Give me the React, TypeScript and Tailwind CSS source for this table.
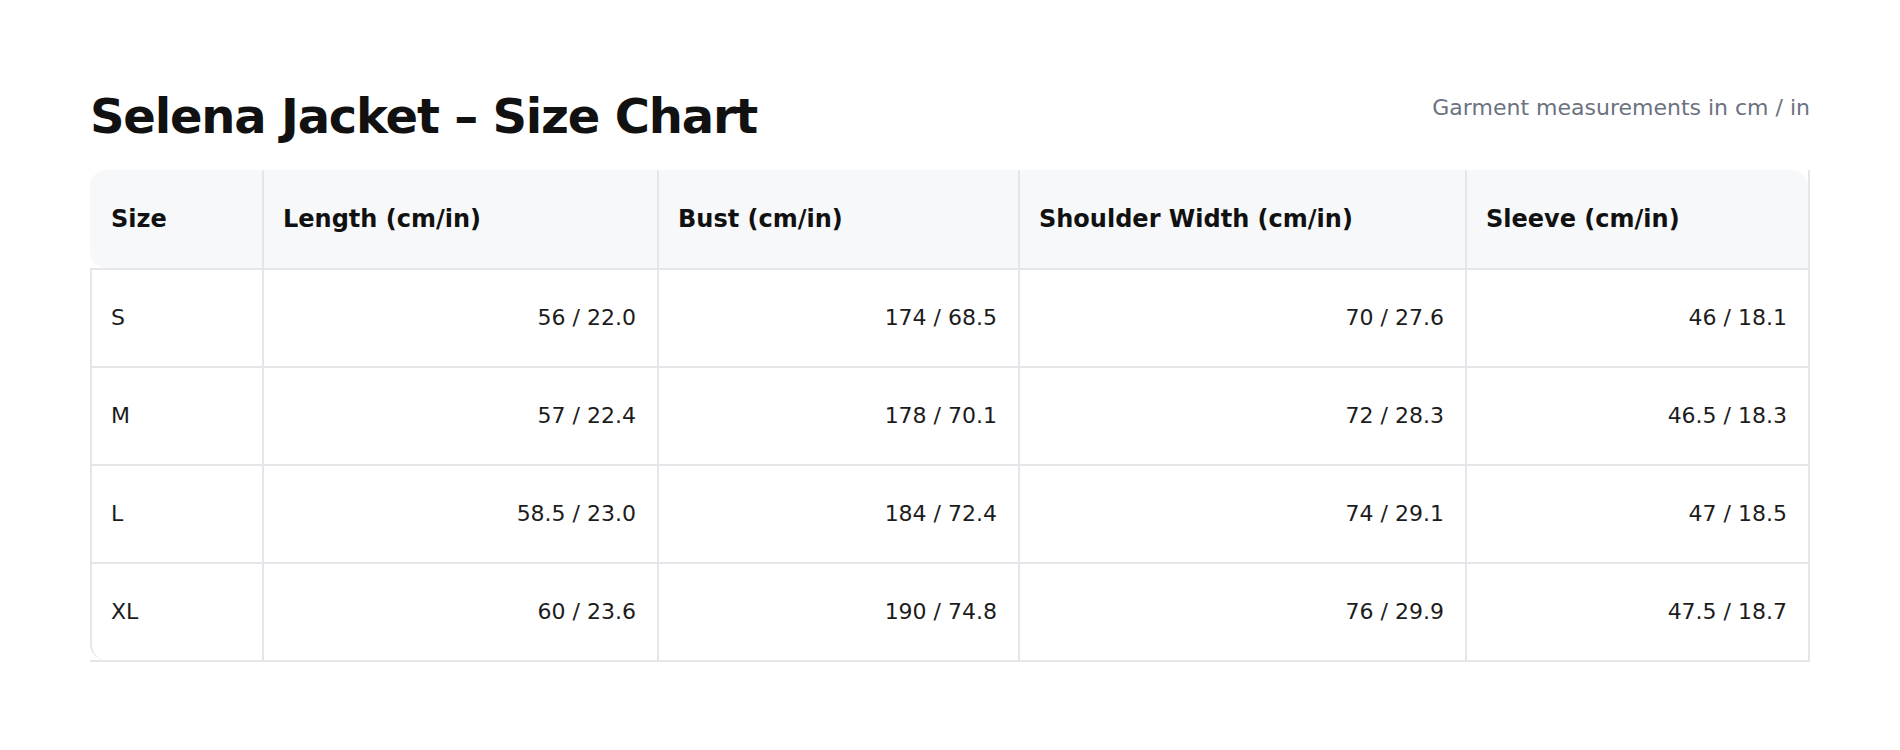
import React from "react";

const rows = [
  { size: "S", length: "56 / 22.0", bust: "174 / 68.5", shoulder: "70 / 27.6", sleeve: "46 / 18.1" },
  { size: "M", length: "57 / 22.4", bust: "178 / 70.1", shoulder: "72 / 28.3", sleeve: "46.5 / 18.3" },
  { size: "L", length: "58.5 / 23.0", bust: "184 / 72.4", shoulder: "74 / 29.1", sleeve: "47 / 18.5" },
  { size: "XL", length: "60 / 23.6", bust: "190 / 74.8", shoulder: "76 / 29.9", sleeve: "47.5 / 18.7" },
];

export default function App() {
  const last = rows.length - 1;
  return (
    <div
      className="min-h-screen bg-white px-[90px] pt-[92px]"
      style={{ fontFamily: '"DejaVu Sans", Verdana, sans-serif' }}
    >
      <div className="mb-[30px] flex items-start justify-between">
        <h1 className="text-[48px] font-bold leading-[48px] tracking-[-0.025em] text-[#111111]">
          Selena Jacket – Size Chart
        </h1>
        <p className="text-[22px] leading-[32px] text-[#6b7280]">Garment measurements in cm / in</p>
      </div>

      <div className="border-b-2 border-r-2 border-[#e4e6ea]">
        <table className="w-full table-fixed border-separate border-spacing-0">
          <colgroup>
            <col className="w-[174px]" />
            <col className="w-[395px]" />
            <col className="w-[361px]" />
            <col className="w-[447px]" />
            <col />
          </colgroup>
          <thead>
            <tr>
              <th className="rounded-l-[16px] border-r-2 border-[#e4e6ea] bg-[#f7f8fa] px-[21px] py-[32px] text-left text-[24px] font-bold leading-[34px] text-[#111111]">
                Size
              </th>
              <th className="border-r-2 border-[#e4e6ea] bg-[#f7f8fa] px-[19px] py-[32px] text-left text-[24px] font-bold leading-[34px] text-[#111111]">
                Length (cm/in)
              </th>
              <th className="border-r-2 border-[#e4e6ea] bg-[#f7f8fa] px-[19px] py-[32px] text-left text-[24px] font-bold leading-[34px] text-[#111111]">
                Bust (cm/in)
              </th>
              <th className="border-r-2 border-[#e4e6ea] bg-[#f7f8fa] px-[19px] py-[32px] text-left text-[24px] font-bold leading-[34px] text-[#111111]">
                Shoulder Width (cm/in)
              </th>
              <th className="rounded-tr-[16px] bg-[#f7f8fa] px-[19px] py-[32px] text-left text-[24px] font-bold leading-[34px] text-[#111111]">
                Sleeve (cm/in)
              </th>
            </tr>
          </thead>
          <tbody>
            {rows.map((r, i) => (
              <tr key={r.size}>
                <td
                  className={
                    i === last
                      ? "rounded-bl-[16px] border-l-2 border-r-2 border-t-2 border-[#e4e6ea] px-[19px] py-[31px] text-left text-[22px] leading-[34px] text-[#1c1c1c]"
                      : "border-l-2 border-r-2 border-t-2 border-[#e4e6ea] px-[19px] py-[31px] text-left text-[22px] leading-[34px] text-[#1c1c1c]"
                  }
                >
                  {r.size}
                </td>
                <td className="border-r-2 border-t-2 border-[#e4e6ea] px-[21px] py-[31px] text-right text-[22px] leading-[34px] text-[#1c1c1c]">
                  {r.length}
                </td>
                <td className="border-r-2 border-t-2 border-[#e4e6ea] px-[21px] py-[31px] text-right text-[22px] leading-[34px] text-[#1c1c1c]">
                  {r.bust}
                </td>
                <td className="border-r-2 border-t-2 border-[#e4e6ea] px-[21px] py-[31px] text-right text-[22px] leading-[34px] text-[#1c1c1c]">
                  {r.shoulder}
                </td>
                <td className="border-t-2 border-[#e4e6ea] px-[21px] py-[31px] text-right text-[22px] leading-[34px] text-[#1c1c1c]">
                  {r.sleeve}
                </td>
              </tr>
            ))}
          </tbody>
        </table>
      </div>
    </div>
  );
}
